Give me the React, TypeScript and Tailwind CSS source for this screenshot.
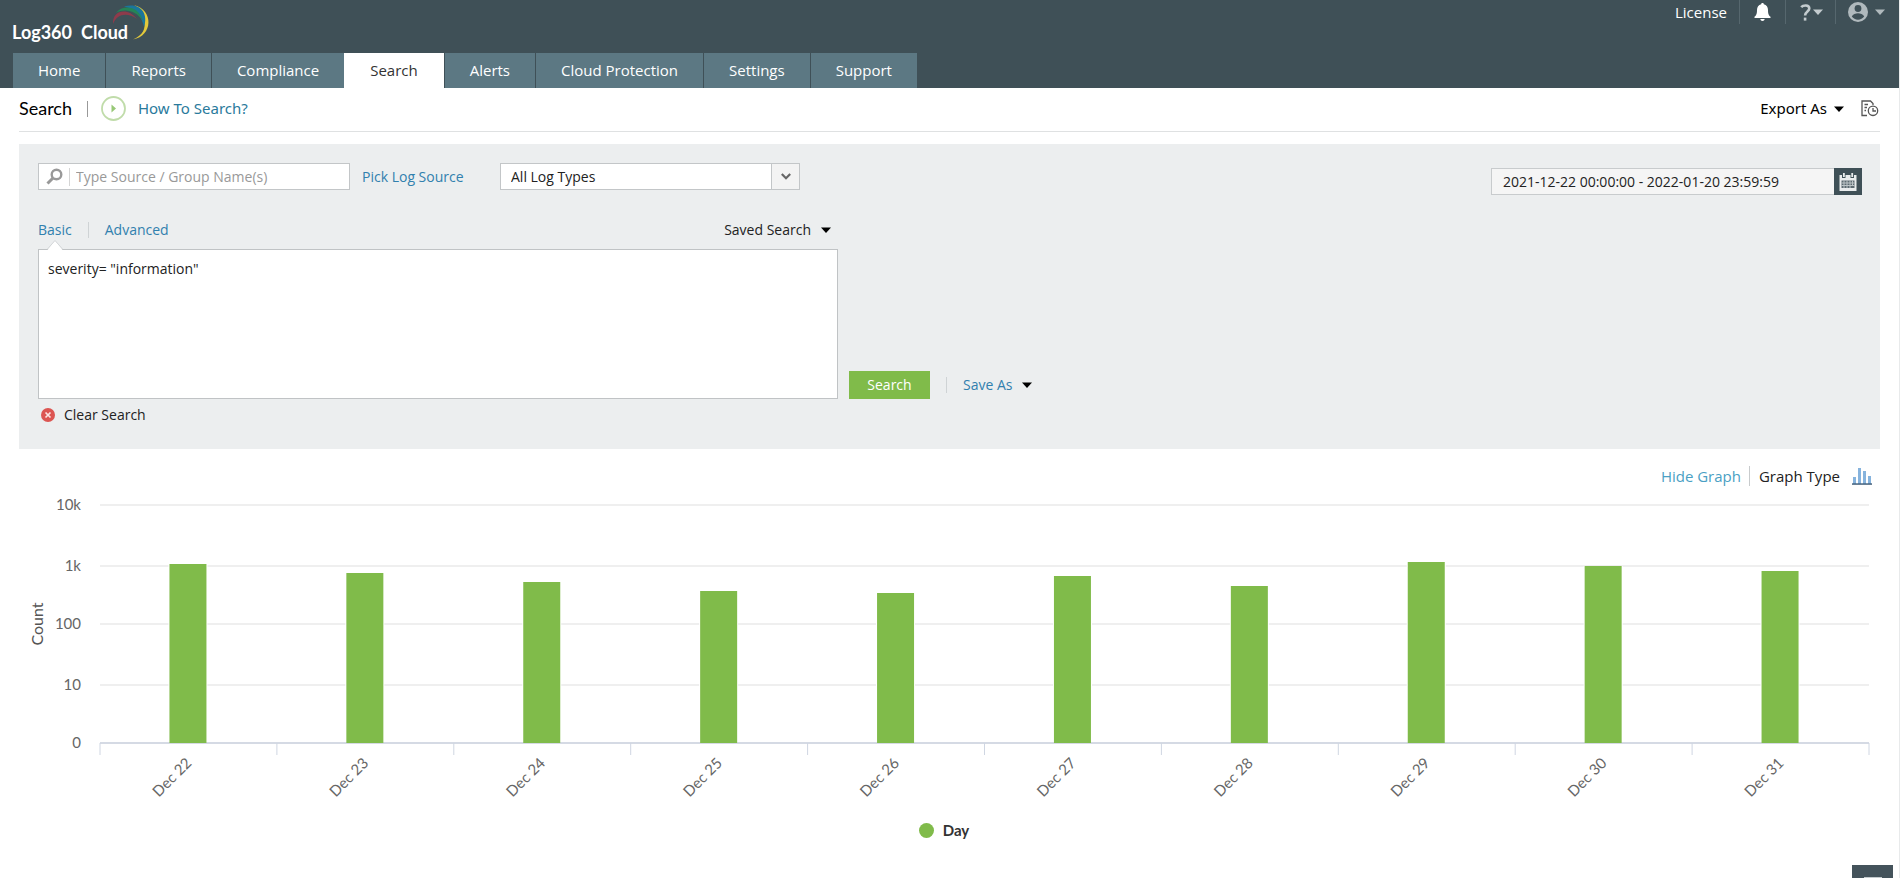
import { useState } from 'react';
import type { ReactNode } from 'react';

const TABS = ['Home', 'Reports', 'Compliance', 'Search', 'Alerts', 'Cloud Protection', 'Settings', 'Support'];

const GRID_LINES = [
  { label: '10k', y: 1 },
  { label: '1k', y: 62 },
  { label: '100', y: 120 },
  { label: '10', y: 181 },
  { label: '0', y: 239 },
];

const BARS = [
  { day: 'Dec 22', height: 179 },
  { day: 'Dec 23', height: 170 },
  { day: 'Dec 24', height: 161 },
  { day: 'Dec 25', height: 152 },
  { day: 'Dec 26', height: 150 },
  { day: 'Dec 27', height: 167 },
  { day: 'Dec 28', height: 157 },
  { day: 'Dec 29', height: 181 },
  { day: 'Dec 30', height: 177 },
  { day: 'Dec 31', height: 172 },
];

function Caret({ className = '' }: { className?: string }) {
  return (
    <svg width="10" height="6" viewBox="0 0 10 6" className={className} aria-hidden="true">
      <path d="M0 0.5h10L5 6z" fill="currentColor" />
    </svg>
  );
}

function Logo() {
  return (
    <svg width="142" height="44" viewBox="0 0 142 44" role="img" aria-label="Log360 Cloud">
      <path d="M122 5C142 10 141 36 121 39.500C131 35 134 29 132 20C131 13 128 8 122 5Z" fill="#e3c93b" />
      <path d="M112 6.500C127 2 137 12 132 27C130 17 124 9 112 6.500Z" fill="#1b759c" />
      <path d="M104 13C111 4 127 6 131 21C124 11 114 8 104 13Z" fill="#258457" />
      <path d="M101 24C100 10 116 7 125 19C115 12 105 14 101 24Z" fill="#8e3b4b" />
      <text x="0" y="39" fill="#fff" className="font-['Lato'] text-[18px] font-bold">Log360</text>
      <text x="69" y="39" fill="#fff" className="font-['Lato'] text-[18px] font-bold">Cloud</text>
    </svg>
  );
}

function HeaderDivider() {
  return <span className="h-6 w-px bg-[#56676e]" />;
}

function Header() {
  return (
    <header className="bg-[#3f5057] pl-3">
      <div className="flex h-[53px] items-start justify-between">
        <a href="#home"><Logo /></a>
        <div className="flex h-6 items-center pr-[14px] text-[15px] text-white">
          <a href="#license" className="mr-3">License</a>
          <HeaderDivider />
          <button type="button" aria-label="Notifications" className="mx-[14px]">
            <svg width="17" height="18" viewBox="0 0 17 18" fill="#fff">
              <path d="M8.500 0c.8 0 1.300.5 1.300 1.200C12.500 1.800 14 4 14 7c0 4 .7 5.300 2.500 6.800V15H.5v-1.200C2.300 12.300 3 11 3 7c0-3 1.500-5.200 4.200-5.800C7.200.5 7.700 0 8.500 0zM6.300 16h4.400c-.2 1.200-1 2-2.200 2s-2-.8-2.200-2z" />
            </svg>
          </button>
          <HeaderDivider />
          <button type="button" aria-label="Help" className="mr-3 ml-[14px] flex items-center gap-[2px] text-[#c3cbce]">
            <svg width="11" height="17" viewBox="0 0 11 17" fill="none" stroke="currentColor" strokeWidth="2.6">
              <path d="M1.200 3.200C3 1.200 9.300.4 9.300 4.500c0 3-4.200 3-4.200 7" />
              <path d="M5.100 13.600v3" />
            </svg>
            <Caret />
          </button>
          <HeaderDivider />
          <button type="button" aria-label="Account" className="ml-3 flex items-center gap-[7px] text-[#b0b9bd]">
            <svg width="20" height="20" viewBox="0 0 20 20">
              <circle cx="10" cy="10" r="10" fill="currentColor" />
              <circle cx="10" cy="6.500" r="3.400" fill="#3f5057" />
              <path d="M3.800 14.600c1-2.500 4-3.300 6.200-3.300s5.200.8 6.200 3.300C14.800 16.600 12.500 17.800 10 17.800s-4.800-1.200-6.200-3.200z" fill="#3f5057" />
            </svg>
            <Caret />
          </button>
        </div>
      </div>
      <nav className="flex h-[35px] gap-px pl-px text-[15px]">
        {TABS.map((tab) => (
          <a
            key={tab}
            href={`#${tab.toLowerCase().replace(' ', '-')}`}
            className={`flex items-center ${tab === 'Search' ? '-ml-px bg-white px-[26px] text-[#333]' : 'bg-[#5c7883] px-[25px] text-white'}`}
          >
            {tab}
          </a>
        ))}
      </nav>
    </header>
  );
}

function TitleBar() {
  return (
    <div className="flex h-11 items-center justify-between border-b border-[#dfe1e2] pb-[2px]">
      <div className="flex items-center">
        <h1 className="font-['Lato'] text-[18px] text-black">Search</h1>
        <span className="mr-[13px] ml-[15px] h-4 w-px bg-[#999]" />
        <a href="#how-to" className="flex items-center gap-3 font-['Noto_Sans'] text-[15px] text-[#2a7a9c]">
          <svg width="25" height="25" viewBox="0 0 25 25">
            <circle cx="12.500" cy="12.500" r="11.500" fill="#fff" stroke="#c0dcaa" strokeWidth="1.800" />
            <path d="M10.500 8.500v8l4.500-4z" fill="#97c877" />
          </svg>
          How To Search?
        </a>
      </div>
      <div className="flex items-center pr-[1px]">
        <button type="button" className="flex items-center gap-[7px] font-['Noto_Sans'] text-[15px] text-black">
          Export As <Caret />
        </button>
        <button type="button" aria-label="Export history" className="ml-[17px]">
          <svg width="18" height="17" viewBox="0 0 18 17" fill="none" stroke="#555" strokeWidth="1.300">
            <path d="M6 15.500H1V1h8.500l2.500 2.500V5" />
            <path d="M3.500 4.500H7M3.500 7.500H6M3.500 10.500H5" />
            <circle cx="12" cy="10.800" r="4.700" fill="#fff" />
            <path d="M12 8v3h3" />
          </svg>
        </button>
      </div>
    </div>
  );
}

function SourceFilters() {
  return (
    <div className="flex items-start justify-between">
      <div className="flex items-center">
        <label className="flex h-[27px] w-[312px] items-center border border-[#c3c6c8] bg-white pl-[7px]">
          <svg width="17" height="17" viewBox="0 0 17 17" fill="none" stroke="#999">
            <circle cx="10.500" cy="6.500" r="4.800" strokeWidth="2.400" />
            <path d="M7 10l-5.500 5.500" strokeWidth="3" />
          </svg>
          <span className="mr-[6px] ml-[6px] h-[18px] w-px bg-[#d5d5d5]" />
          <input
            aria-label="Log source"
            placeholder="Type Source / Group Name(s)"
            className="min-w-0 flex-1 outline-none placeholder:text-[#999]"
          />
        </label>
        <a href="#pick" className="ml-3 w-[138px] text-[#3180ae]">Pick Log Source</a>
        <div className="relative">
          <select
            aria-label="Log types"
            className="h-[27px] w-[300px] appearance-none border border-[#c3c6c8] bg-white pl-[10px] text-[#222]"
          >
            <option>All Log Types</option>
          </select>
          <span className="pointer-events-none absolute inset-y-0 right-0 flex w-[29px] items-center justify-center border border-[#c3c6c8] bg-[#f3f3f3]">
            <svg width="10" height="7" viewBox="0 0 10 7" fill="none" stroke="#666" strokeWidth="2.200">
              <path d="M0.800 1L5 5.200 9.200 1" />
            </svg>
          </span>
        </div>
      </div>
      <div className="mt-[5px] flex">
        <input
          aria-label="Date range"
          defaultValue="2021-12-22 00:00:00 - 2022-01-20 23:59:59"
          className="h-[27px] w-[343px] border border-r-0 border-[#c8cbcd] bg-[#f5f5f5] pl-[11px] text-[#222] outline-none"
        />
        <button type="button" aria-label="Pick dates" className="flex h-[27px] w-7 items-center justify-center bg-[#3f5057]">
          <svg width="18" height="18" viewBox="0 0 18 18">
            <path d="M0.500 2h17v16h-17z" fill="#e9eced" />
            <path d="M3 0h3.500v5H3zM11.500 0H15v5h-3.500z" fill="#3f5057" />
            <path d="M4 0h1.800v4H4zM12.300 0h1.800v4h-1.800z" fill="#e9eced" />
            <path d="M2.500 7.500h13v7.500h-13z" fill="#5c6a71" />
            <path d="M2.500 10h13M2.500 12.500h13M5 7.500v7.500M8 7.500v7.500M11 7.500v7.500M13.500 7.500v5" stroke="#bcc4c7" strokeWidth="1" />
          </svg>
        </button>
      </div>
    </div>
  );
}

function QueryEditor() {
  const [query, setQuery] = useState('severity= "information"');

  return (
    <>
      <div className="mt-[25px] flex items-end">
        <div className="w-[800px]">
          <div className="flex h-[29px] items-start justify-between">
            <div className="relative flex items-center">
              <button type="button" className="text-[#3180ae]">Basic</button>
              <span className="mx-4 h-4 w-px bg-[#cfd3d5]" />
              <button type="button" className="text-[#3180ae]">Advanced</button>
              <svg width="16" height="11" viewBox="0 0 16 11" className="absolute top-[19px] left-[9px]">
                <path d="M0.500 11L8 1.500 15.500 11z" fill="#fff" />
                <path d="M0.500 10L8 1.500 15.500 10" fill="none" stroke="#d3d6d8" />
              </svg>
            </div>
            <button type="button" className="mr-[7px] flex items-center gap-[10px] text-[#222]">
              Saved Search <Caret className="text-black" />
            </button>
          </div>
          <textarea
            aria-label="Query"
            value={query}
            onChange={(e) => setQuery(e.target.value)}
            className="block h-[150px] w-full resize-none border border-[#c0c3c5] bg-white px-[9px] py-[9px] text-[#222] outline-none"
          />
        </div>
        <button type="button" className="ml-[11px] h-7 w-[81px] bg-[#80bb4a] text-white">Search</button>
        <span className="mr-4 mb-[6px] ml-4 h-4 w-px bg-[#cfd3d5]" />
        <button type="button" className="mb-1 flex items-center gap-[10px] text-[#3180ae]">
          Save As <Caret className="text-black" />
        </button>
      </div>
      <button type="button" onClick={() => setQuery('')} className="mt-[6px] ml-[3px] flex items-center gap-[9px] text-[#222]">
        <svg width="14" height="14" viewBox="0 0 14 14">
          <circle cx="7" cy="7" r="7" fill="#dc5552" />
          <path d="M4.500 4.500l5 5M9.500 4.500l-5 5" stroke="#fbe3e2" strokeWidth="1.700" />
        </svg>
        Clear Search
      </button>
    </>
  );
}

function GraphToolbar() {
  return (
    <div className="mt-[15px] flex h-6 items-center justify-end pr-2 text-[15px]">
      <button type="button" className="text-[#4a9fc4]">Hide Graph</button>
      <span className="mr-[9px] ml-2 h-5 w-px bg-[#c8cbcd]" />
      <button type="button" className="flex items-center gap-3 text-[#222]">
        Graph Type
        <svg width="20" height="17" viewBox="0 0 20 17">
          <path d="M1 9h3v7H1zM6 0h3v16H6zM11 3h3v13h-3zM16 8h3v8h-3z" fill="#86b3dd" />
          <path d="M0 15.300h20v1.500H0z" fill="#44617c" />
        </svg>
      </button>
    </div>
  );
}

function CountChart() {
  return (
    <section className="pt-4">
      <div className="pr-[11px] pl-[81px]">
        <svg width="100%" height="303" className="block overflow-visible font-['Lato'] text-[15px]">
          {GRID_LINES.map(({ label, y }) => (
            <g key={label}>
              <line x1="0" x2="100%" y1={y} y2={y} stroke={label === '0' ? '#d5dae4' : '#efefef'} strokeWidth="2" />
              <text x="-19" y={y + 5} textAnchor="end" fill="#666">{label}</text>
            </g>
          ))}
          <text transform="translate(-57 120) rotate(-90)" textAnchor="middle" fill="#555" className="text-[16px]">Count</text>
          {BARS.map(({ day, height }, i) => (
            <svg key={day} x={`${i * 10 + 5}%`} className="overflow-visible">
              <rect x="-20" y={239 - height} width="39" height={height - 1} fill="#fff" />
              <rect x="-19" y={239 - height} width="37" height={height} fill="#80bb4a" />
              <text transform="translate(4 260) rotate(-45)" textAnchor="end" fill="#666">{day}</text>
            </svg>
          ))}
          {Array.from({ length: 11 }, (_, i) => (
            <line key={i} x1={`${i * 10}%`} x2={`${i * 10}%`} y1="239" y2="251" stroke="#cfd6e2" />
          ))}
        </svg>
      </div>
      <div className="flex items-center justify-center gap-[9px] pt-3 pr-[11px] font-['Lato'] text-[15px] font-bold text-[#333]">
        <span className="size-[15px] rounded-full bg-[#80bb4a]" />
        Day
      </div>
    </section>
  );
}

function Panel({ children }: { children: ReactNode }) {
  return (
    <section className="mt-3 bg-[#eceeef] pt-[19px] pr-[18px] pb-6 pl-[19px] text-[14px] leading-5">{children}</section>
  );
}

export default function App() {
  return (
    <div className="min-h-screen border-r border-[#e8eaeb] bg-white font-['Open_Sans',sans-serif]">
      <Header />
      <main className="px-[19px]">
        <TitleBar />
        <Panel>
          <SourceFilters />
          <QueryEditor />
        </Panel>
        <GraphToolbar />
        <CountChart />
      </main>
      <button
        type="button"
        aria-label="Open chat"
        className="fixed right-[7px] bottom-0 flex h-[13px] w-[41px] items-end justify-center bg-[#44535b]"
      >
        <span className="h-px w-[18px] bg-[#c3cacd]" />
      </button>
    </div>
  );
}
